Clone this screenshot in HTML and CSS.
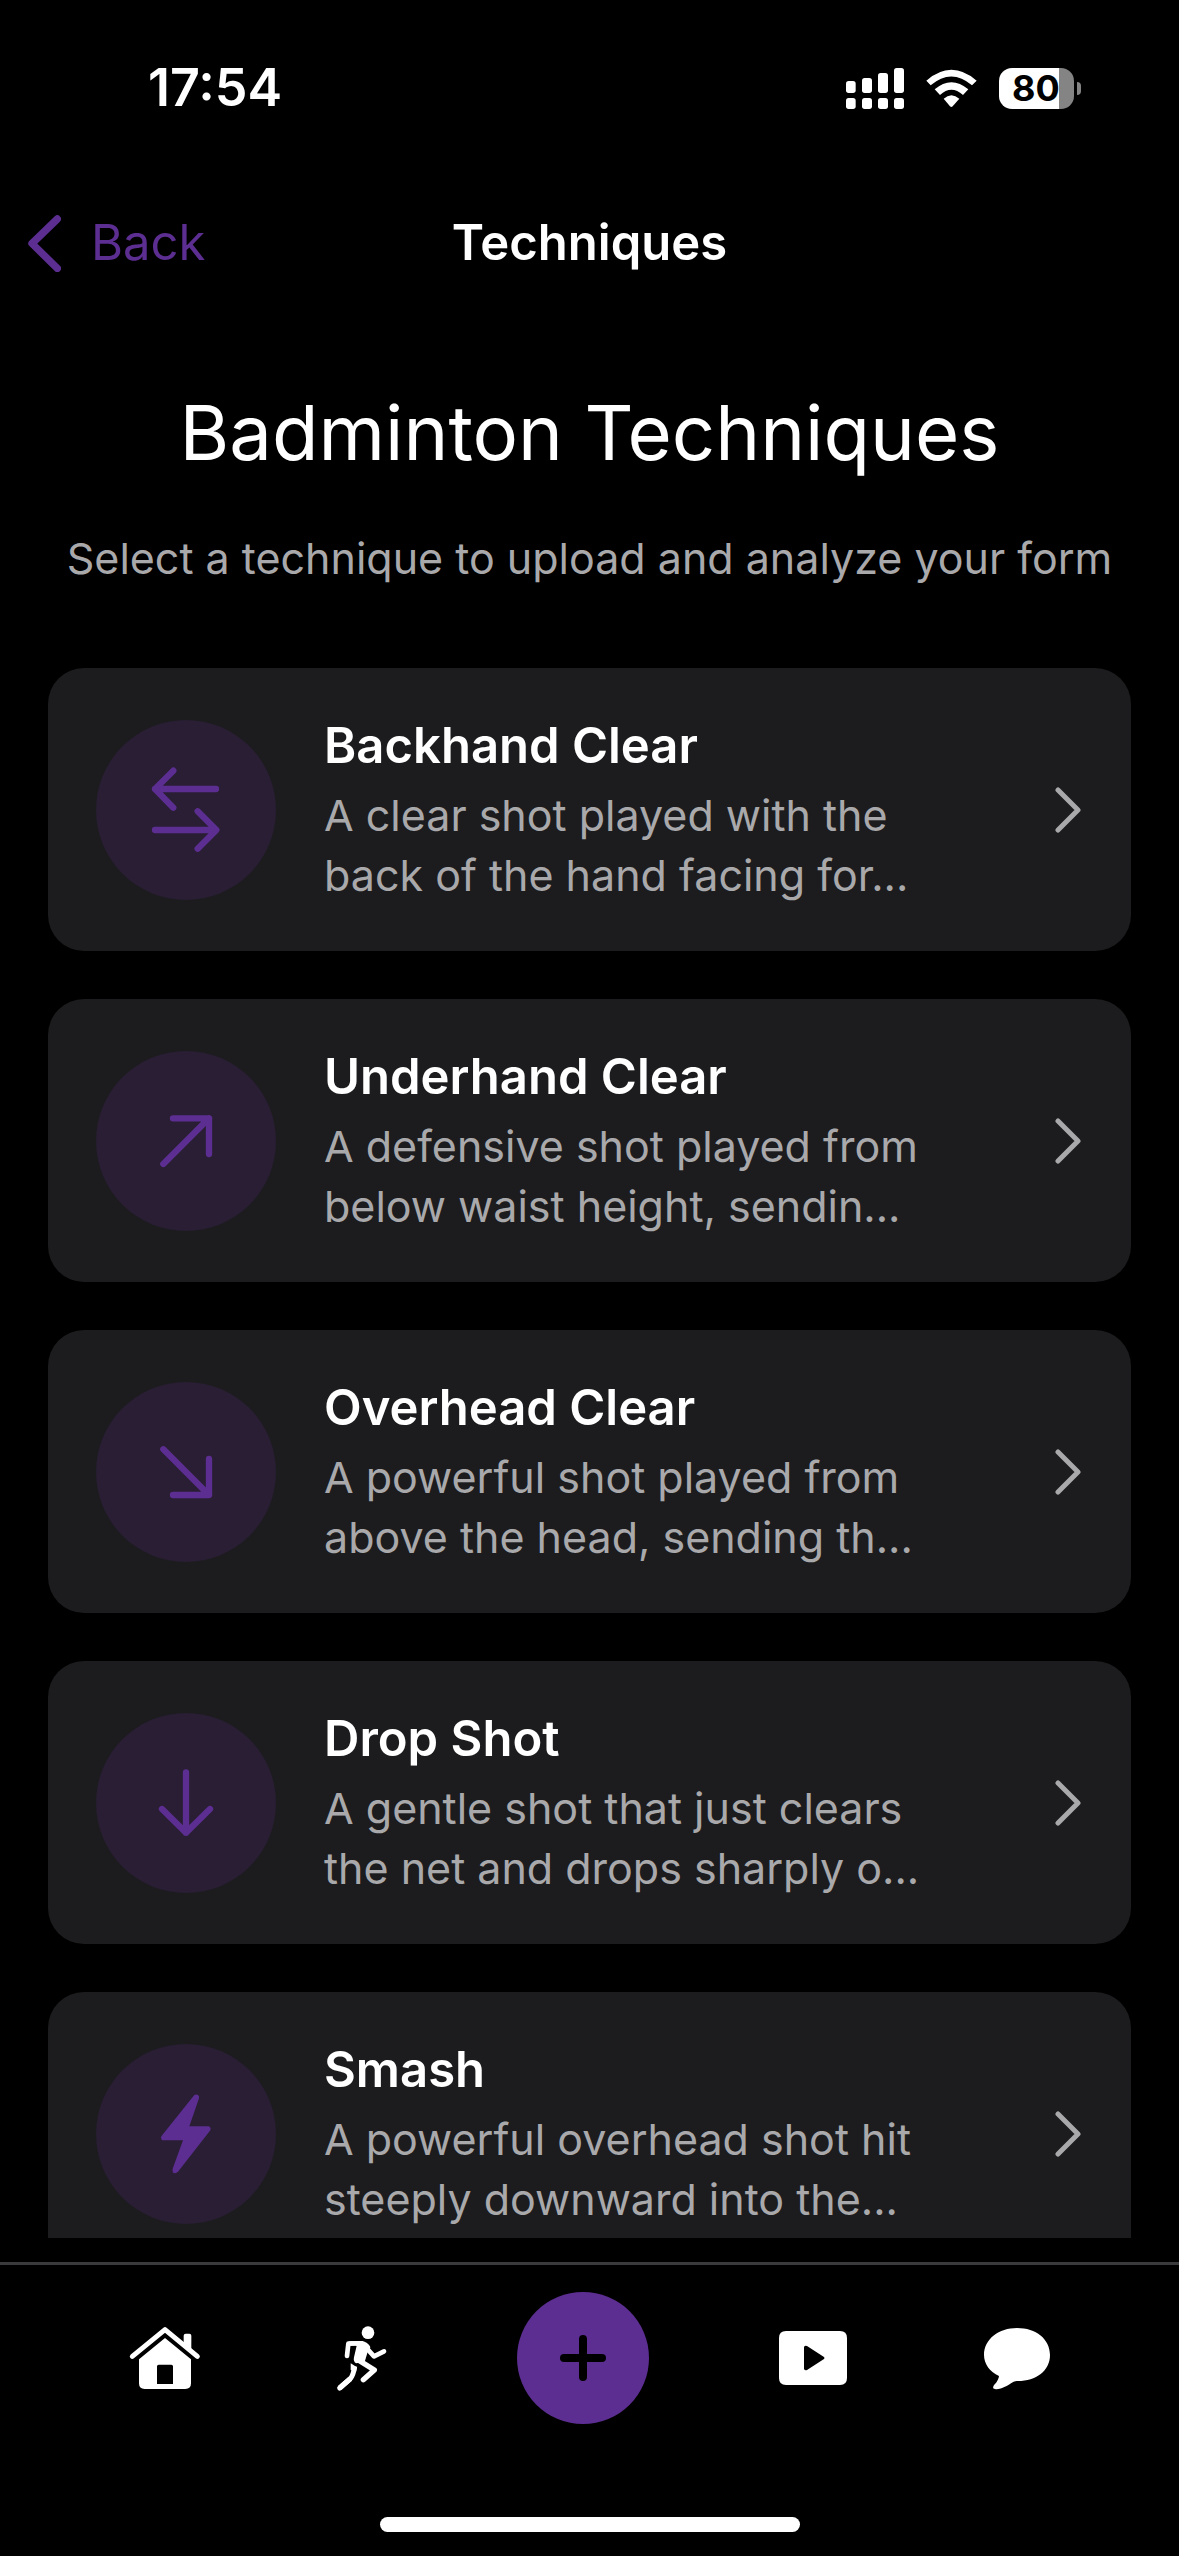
FILE: index.html
```
<!DOCTYPE html>
<html lang="en">
<head>
<meta charset="utf-8">
<meta name="viewport" content="width=device-width, initial-scale=1">
<title>Techniques</title>
<link rel="stylesheet" href="styles.css">
</head>
<body>
<div class="status">
  <time class="clock">17:54</time>
  <div class="status-icons">
    <svg class="signal" viewBox="78 51 174 123" aria-hidden="true">
      <rect x="78" y="90" width="29" height="36" rx="8"/><rect x="126" y="81" width="30" height="45" rx="8"/>
      <rect x="174" y="66" width="30" height="60" rx="8"/><rect x="222" y="51" width="30" height="75" rx="8"/>
      <rect x="78" y="141" width="29" height="33" rx="8"/><rect x="126" y="141" width="30" height="33" rx="8"/>
      <rect x="174" y="141" width="30" height="33" rx="8"/><rect x="222" y="141" width="30" height="33" rx="8"/>
    </svg>
    <svg class="wifi" viewBox="318 54 153 117" aria-hidden="true">
      <path d="M319 89Q394 24 470 89L456 103Q394 50 332 103Z"/>
      <path d="M344 115Q394 72 445 115L429 132Q394 101 360 132Z"/>
      <path d="M371 143Q394 122 418 143L398 166Q394 170 390 166Z"/>
    </svg>
    <div class="battery"><span class="battery-level">80</span><i class="battery-tip"></i></div>
  </div>
</div>

<header class="navbar">
  <a class="back" href="#">
    <svg class="back-icon" viewBox="84 72 99 171" aria-hidden="true"><path d="M172 84 96 157.500 172 232"/></svg>
    Back
  </a>
  <strong class="navbar-title">Techniques</strong>
</header>

<main class="content">
  <h1 class="title">Badminton Techniques</h1>
  <p class="subtitle">Select a technique to upload and analyze your form</p>
  <ul class="list">
    <li><a class="card" href="#">
      <svg class="badge" viewBox="48 60 540 540" aria-hidden="true"><path d="M408 267H225M280 212 225 267 280 323M225 390H408M353 334 409 390 353 446"/></svg>
      <div class="card-text"><h2 class="card-title">Backhand Clear</h2><p class="card-desc">A clear shot played with the back of the hand facing for...</p></div>
      <svg class="chevron" viewBox="0 0 28 48" aria-hidden="true"><path d="M3 4 23 24 3 44"/></svg>
    </a></li>
    <li><a class="card" href="#">
      <svg class="badge" viewBox="48 33 540 540" aria-hidden="true"><path d="M250 372 387 235M279 235H387V342"/></svg>
      <div class="card-text"><h2 class="card-title">Underhand Clear</h2><p class="card-desc">A defensive shot played from below waist height, sendin...</p></div>
      <svg class="chevron" viewBox="0 0 28 48" aria-hidden="true"><path d="M3 4 23 24 3 44"/></svg>
    </a></li>
    <li><a class="card" href="#">
      <svg class="badge" viewBox="48 36 540 540" aria-hidden="true"><path d="M250 238 387 375M279 375H387V267"/></svg>
      <div class="card-text"><h2 class="card-title">Overhead Clear</h2><p class="card-desc">A powerful shot played from above the head, sending th...</p></div>
      <svg class="chevron" viewBox="0 0 28 48" aria-hidden="true"><path d="M3 4 23 24 3 44"/></svg>
    </a></li>
    <li><a class="card" href="#">
      <svg class="badge" viewBox="48 39 540 540" aria-hidden="true"><path d="M318 217V398M246 327 318 398 390 327"/></svg>
      <div class="card-text"><h2 class="card-title">Drop Shot</h2><p class="card-desc">A gentle shot that just clears the net and drops sharply o...</p></div>
      <svg class="chevron" viewBox="0 0 28 48" aria-hidden="true"><path d="M3 4 23 24 3 44"/></svg>
    </a></li>
    <li><a class="card" href="#">
      <svg class="badge badge-solid" viewBox="48 41 540 540" aria-hidden="true"><path d="M343 194Q350 190 357 197Q358 202 356 207L328 288H386Q394 291 391 300L294 424Q287 431 279 427Q277 422 278 415L309 330H246Q240 325 244 318Z"/></svg>
      <div class="card-text"><h2 class="card-title">Smash</h2><p class="card-desc">A powerful overhead shot hit steeply downward into the...</p></div>
      <svg class="chevron" viewBox="0 0 28 48" aria-hidden="true"><path d="M3 4 23 24 3 44"/></svg>
    </a></li>
  </ul>
</main>

<nav class="tabbar">
  <a class="tab tab-home" href="#" aria-label="Home">
    <svg viewBox="81 114 240 240" aria-hidden="true">
      <path d="M97 229 195 149 292 229" fill="none" stroke="currentColor" stroke-width="15" stroke-linecap="round" stroke-linejoin="round"/>
      <path d="M251 190V167Q251 161 257 161H268Q274 161 274 167V212Z"/>
      <path fill-rule="evenodd" d="M195 174 273 238V310Q273 327 256 327H134Q117 327 117 310V238ZM176 254Q171 254 171 259V312H219V259Q219 254 214 254Z"/>
    </svg>
  </a>
  <a class="tab tab-run" href="#" aria-label="Training">
    <svg viewBox="702 114 168 240" aria-hidden="true">
      <circle cx="804" cy="158" r="19"/>
      <g fill="none" stroke="currentColor" stroke-linecap="round" stroke-linejoin="round">
        <path d="M741 228 745 191 784 190" stroke-width="14"/>
        <path d="M795 199 822 229 852 214" stroke-width="14"/>
        <path d="M776 241 823 270 790 299" stroke-width="16"/>
        <path d="M764 259Q760 287 750 297L719 324" stroke-width="15" stroke-linecap="butt"/>
        <path d="M750 297 719 324" stroke-width="15"/>
      </g>
      <path d="M745 184 787 183Q801 186 810 199Q813 207 804 212L794 246 768 250Q759 244 762 232L770 197Z"/>
      <path d="M752 250 771 262 768 275 752 270Z"/>
    </svg>
  </a>
  <button class="add" type="button" aria-label="Add">
    <svg viewBox="0 0 46 46" aria-hidden="true"><path d="M23 4V42M4 23H42"/></svg>
  </button>
  <a class="tab tab-video" href="#" aria-label="Videos">
    <svg viewBox="0 0 76 76" aria-hidden="true"><path fill-rule="evenodd" d="M10 11H64Q71 11 71 18V58Q71 65 64 65H10Q3 65 3 58V18Q3 11 10 11ZM28 27V49Q29 51 31 50L48 39Q49 38 48 37L31 26Q29 25 28 27Z"/></svg>
  </a>
  <a class="tab tab-chat" href="#" aria-label="Chat">
    <svg viewBox="0 0 73 80" aria-hidden="true"><path d="M38 10C57 10 71 21 71 37S57 63 39 63C35 63 34 64 31 66C26 69 20 72 16 71C13 71 14 68 16 66C18 64 20 60 20 58C11 54 5 46 5 37C5 21 20 10 38 10Z"/></svg>
  </a>
</nav>
<div class="home-indicator"></div>
</body>
</html>
```

FILE: styles.css
```
* { box-sizing: border-box; }

body {
  display: flex;
  flex-direction: column;
  height: 100vh;
  margin: 0;
  background: #000;
  color: #fff;
  font-family: Inter, "Liberation Sans", sans-serif;
}

a { color: inherit; text-decoration: none; }
h1, h2, p, ul { margin: 0; padding: 0; }
ul { list-style: none; }
svg { display: block; fill: currentColor; flex: none; }

/* Status bar */
.status {
  display: flex;
  align-items: center;
  justify-content: space-between;
  flex: none;
  height: 176px;
  padding: 0 98px 0 148px;
}
.clock { font-size: 52px; font-weight: 600; line-height: 60px; }
.status-icons { display: flex; align-items: center; gap: 22px; }
.signal { width: 58px; height: 41px; }
.wifi { width: 51px; height: 39px; }
.battery { display: flex; align-items: center; gap: 3px; }
.battery-level {
  width: 75px;
  height: 41px;
  padding-left: 13px;
  border-radius: 13px;
  background: linear-gradient(to right, #fff 60px, #848484 60px);
  color: #000;
  font-size: 36px;
  font-weight: 700;
  line-height: 41px;
}
.battery-tip { width: 4px; height: 13px; border-radius: 0 6px 6px 0; background: #848484; }

/* Navigation bar */
.navbar {
  display: grid;
  grid-template-columns: 1fr auto 1fr;
  align-items: center;
  flex: none;
  height: 134px;
  padding: 0 28px;
}
.back {
  display: flex;
  align-items: center;
  gap: 30px;
  color: #5c2e91;
  font-size: 49px;
  line-height: 60px;
}
.back-icon { width: 33px; height: 57px; fill: none; stroke: currentColor; stroke-width: 22; stroke-linecap: round; stroke-linejoin: round; }
.navbar-title { font-size: 49px; font-weight: 600; line-height: 60px; }

/* Scrolling content */
.content {
  flex: 1;
  min-height: 0;
  padding: 72px 48px 0;
  overflow-y: auto;
  scrollbar-width: none;
}
.title { font-size: 76px; font-weight: 400; line-height: 100px; text-align: center; }
.subtitle {
  margin: 46px -24px 80px;
  color: #a9a9ac;
  font-size: 43px;
  line-height: 60px;
  text-align: center;
}
.list { display: grid; gap: 48px; padding-bottom: 48px; }
.card {
  display: flex;
  align-items: center;
  padding: 47px 48px 46px;
  border-radius: 36px;
  background: #1c1c1e;
}
.badge {
  width: 180px;
  height: 180px;
  border-radius: 50%;
  background: #291e34;
  color: #5c2e91;
  fill: none;
  stroke: currentColor;
  stroke-width: 19;
  stroke-linecap: round;
  stroke-linejoin: round;
}
.badge-solid { fill: currentColor; stroke: none; }
.card-text { flex: 1; margin: 0 110px 0 48px; }
.card-title { font-size: 49px; font-weight: 600; line-height: 62px; }
.card-desc { margin-top: 8px; color: #a9a9ac; font-size: 43px; line-height: 60px; }
.chevron { width: 28px; height: 48px; fill: none; stroke: #a9a9ac; stroke-width: 5; stroke-linecap: round; stroke-linejoin: round; }

/* Tab bar */
.tabbar {
  display: flex;
  align-items: center;
  justify-content: space-evenly;
  flex: none;
  margin-top: 24px;
  padding: 27px 0;
  border-top: 3px solid #3a3a3c;
}
.tab-home svg { width: 80px; height: 80px; }
.tab-run svg { width: 56px; height: 80px; }
.tab-video svg { width: 76px; height: 76px; }
.tab-chat svg { width: 73px; height: 80px; }
.add {
  display: grid;
  place-items: center;
  width: 132px;
  height: 132px;
  padding: 0;
  border: 0;
  border-radius: 50%;
  background: #5c2e91;
  color: #000;
}
.add svg { width: 46px; height: 46px; stroke: currentColor; stroke-width: 8; stroke-linecap: round; }
.home-indicator {
  flex: none;
  align-self: center;
  width: 420px;
  height: 15px;
  margin: 66px 0 24px;
  border-radius: 8px;
  background: #fff;
}
```
